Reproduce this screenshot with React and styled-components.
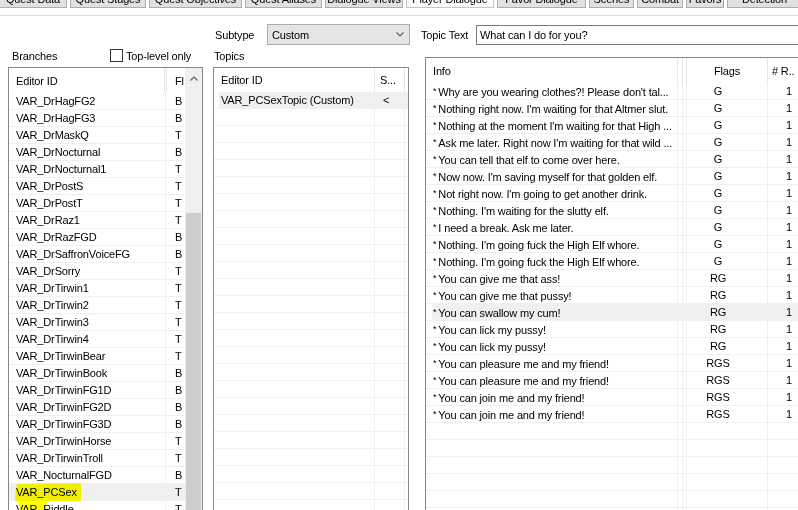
import React from "react";
import styled, { createGlobalStyle } from "styled-components";

const Global = createGlobalStyle`
  html, body { margin: 0; padding: 0; background: #fff; width: 798px; height: 510px; overflow: hidden; }
  body { font-family: "Liberation Sans", Arial, sans-serif; font-size: 11px; letter-spacing: -0.15px; color: #000; }
  * { box-sizing: border-box; }
`;

const Page = styled.div`
  width: 798px;
  height: 510px;
  overflow: hidden;
`;

const TabArea = styled.div`
  display: flex;
  align-items: flex-start;
  height: 16px;
  border-bottom: 1px solid #dadada;
`;

const TabBar = styled.div`
  display: flex;
  gap: 3px;
  margin-top: -14px;
  margin-left: -1px;
`;

const Tab = styled.div`
  flex: none;
  width: ${(p) => p.$w}px;
  height: 22px;
  display: flex;
  align-items: flex-end;
  justify-content: center;
  line-height: 13px;
  padding-bottom: 1px;
  white-space: nowrap;
  overflow: hidden;
  background: ${(p) => (p.$active ? "#fbfbfb" : "#e1e1e1")};
  border: 1px solid ${(p) => (p.$active ? "#c6c6c6" : "#adadad")};
`;

const Main = styled.div`
  display: flex;
  align-items: flex-start;
  padding-left: 8px;
`;

const LeftCol = styled.div`
  flex: none;
  width: 195px;
  display: flex;
  flex-direction: column;
`;

const MidCol = styled.div`
  flex: none;
  width: 197px;
  margin-left: 10px;
  display: flex;
  flex-direction: column;
`;

const RightCol = styled.div`
  flex: none;
  width: 384px;
  margin-left: 15px;
  display: flex;
  flex-direction: column;
`;

const BranchesRow = styled.div`
  margin-top: 32px;
  height: 15px;
  display: flex;
  align-items: center;
`;

const Label = styled.span`
  flex: none;
  width: ${(p) => (p.$w ? `${p.$w}px` : "auto")};
  padding-left: ${(p) => p.$pad || 0}px;
  white-space: nowrap;
`;

const CheckBox = styled.span`
  flex: none;
  width: 13px;
  height: 13px;
  border: 1px solid #333;
  background: #fff;
  margin-right: 3px;
`;

const FieldRow = styled.div`
  margin-top: 8px;
  height: 21px;
  display: flex;
  align-items: center;
  margin-left: ${(p) => p.$ml || 0}px;
  padding-left: ${(p) => p.$pl || 0}px;
`;

const Combo = styled.div`
  flex: 1;
  height: 21px;
  display: flex;
  align-items: center;
  justify-content: space-between;
  padding: 0 5px 0 4px;
  background: #e5e5e5;
  border: 1px solid #acacac;
`;

const TextInput = styled.div`
  flex: 1;
  height: 20px;
  display: flex;
  align-items: center;
  padding-left: 3px;
  background: #fff;
  border: 1px solid #7a7a7a;
  white-space: nowrap;
`;

const TopicsLabel = styled.div`
  margin-top: 5px;
  height: 17px;
  line-height: 13px;
  padding-left: 1px;
`;

const ListBox = styled.div`
  position: relative;
  display: flex;
  width: ${(p) => p.$w}px;
  height: ${(p) => p.$h}px;
  margin-top: ${(p) => p.$mt || 0}px;
  border: 1px solid #828790;
  background: #fff;
  overflow: hidden;
`;

const ListContent = styled.div`
  flex: 1;
  display: flex;
  flex-direction: column;
  min-width: 0;
`;

const HeaderRow = styled.div`
  flex: none;
  display: grid;
  grid-template-columns: ${(p) => p.$cols};
  height: ${(p) => p.$h || 25}px;
`;

const HeaderCell = styled.div`
  display: flex;
  align-items: center;
  justify-content: ${(p) => (p.$center ? "center" : "flex-start")};
  padding-left: ${(p) => p.$pad || 0}px;
  border-right: ${(p) => (p.$line ? "1px solid #e5e5e5" : "none")};
  white-space: nowrap;
  overflow: hidden;
`;

const HeaderDivider = styled.div`
  border-left: 1px solid #e5e5e5;
  border-right: 1px solid #e5e5e5;
`;

const Row = styled.div`
  position: relative;
  flex: none;
  display: grid;
  grid-template-columns: ${(p) => p.$cols};
  height: 17px;
  border-bottom: 1px solid #f0f0f0;
  background: ${(p) =>
    p.$sel
      ? p.$inset
        ? `linear-gradient(to right, transparent ${p.$inset}px, #f0f0f0 ${p.$inset}px)`
        : "#f0f0f0"
      : "transparent"};
`;

const Cell = styled.div`
  line-height: 16px;
  padding-left: ${(p) => p.$pad || 0}px;
  padding-right: ${(p) => p.$padR || 0}px;
  text-align: ${(p) => p.$align || "left"};
  border-right: ${(p) => (p.$line ? "1px solid #f0f0f0" : "none")};
  white-space: nowrap;
  overflow: hidden;
`;

const Star = styled.span`
  font-size: 9px;
  vertical-align: 2px;
  margin-right: 2px;
`;

const ScrollBar = styled.div`
  flex: none;
  width: 17px;
  background: #f0f0f0;
  display: flex;
  flex-direction: column;
  align-items: center;
`;

const ScrollArrow = styled.div`
  flex: none;
  height: 20px;
  width: 17px;
  display: flex;
  align-items: center;
  justify-content: center;
`;

const ScrollThumb = styled.div`
  flex: none;
  width: 15px;
  height: 320px;
  margin-top: 125px;
  background: #cdcdcd;
`;

const Highlight = styled.div`
  position: absolute;
  left: 6px;
  top: -1px;
  width: 66px;
  height: 27px;
  background: #ffff00;
  mix-blend-mode: multiply;
  clip-path: polygon(2px 1px, 66px 0, 66px 18px, 32px 18px, 31px 27px, 5px 27px, 3px 19px, 0 17px, 1px 6px);
  pointer-events: none;
`;

const tabs = [
  ["Quest Data", 68],
  ["Quest Stages", 76],
  ["Quest Objectives", 93],
  ["Quest Aliases", 77],
  ["Dialogue Views", 78],
  ["Player Dialogue", 88, true],
  ["Favor Dialogue", 89],
  ["Scenes", 45],
  ["Combat", 46],
  ["Favors", 38],
  ["Detection", 75],
];

const branches = [
  ["VAR_DrHagFG2", "B"],
  ["VAR_DrHagFG3", "B"],
  ["VAR_DrMaskQ", "T"],
  ["VAR_DrNocturnal", "B"],
  ["VAR_DrNocturnal1", "T"],
  ["VAR_DrPostS", "T"],
  ["VAR_DrPostT", "T"],
  ["VAR_DrRaz1", "T"],
  ["VAR_DrRazFGD", "B"],
  ["VAR_DrSaffronVoiceFG", "B"],
  ["VAR_DrSorry", "T"],
  ["VAR_DrTirwin1", "T"],
  ["VAR_DrTirwin2", "T"],
  ["VAR_DrTirwin3", "T"],
  ["VAR_DrTirwin4", "T"],
  ["VAR_DrTirwinBear", "T"],
  ["VAR_DrTirwinBook", "B"],
  ["VAR_DrTirwinFG1D", "B"],
  ["VAR_DrTirwinFG2D", "B"],
  ["VAR_DrTirwinFG3D", "B"],
  ["VAR_DrTirwinHorse", "T"],
  ["VAR_DrTirwinTroll", "T"],
  ["VAR_NocturnalFGD", "B"],
  ["VAR_PCSex", "T", true],
  ["VAR_Riddle", "T"],
];

const infos = [
  ["Why are you wearing clothes?! Please don't tal...", "G"],
  ["Nothing right now. I'm waiting for that Altmer slut.", "G"],
  ["Nothing at the moment I'm waiting for that High ...", "G"],
  ["Ask me later. Right now I'm waiting for that wild ...", "G"],
  ["You can tell that elf to come over here.", "G"],
  ["Now now. I'm saving myself for that golden elf.", "G"],
  ["Not right now. I'm going to get another drink.", "G"],
  ["Nothing. I'm waiting for the slutty elf.", "G"],
  ["I need a break. Ask me later.", "G"],
  ["Nothing. I'm going fuck the High Elf whore.", "G"],
  ["Nothing. I'm going fuck the High Elf whore.", "G"],
  ["You can give me that ass!", "RG"],
  ["You can give me that pussy!", "RG"],
  ["You can swallow my cum!", "RG", true],
  ["You can lick my pussy!", "RG"],
  ["You can lick my pussy!", "RG"],
  ["You can pleasure me and my friend!", "RGS"],
  ["You can pleasure me and my friend!", "RGS"],
  ["You can join me and my friend!", "RGS"],
  ["You can join me and my friend!", "RGS"],
];

const LEFT_COLS = "157px 19px";
const TOPIC_COLS = "161px 30px 4px";
const INFO_COLS = "252px 5px 4px 81px 40px";

const Chevron = ({ up }) => (
  <svg width="8" height="5" viewBox="0 0 8 5">
    <path
      d={up ? "M0.5 4.5 L4 1 L7.5 4.5" : "M0.5 0.5 L4 4 L7.5 0.5"}
      fill="none"
      stroke="#606060"
      strokeWidth="1.2"
    />
  </svg>
);

export default function App() {
  return (
    <Page>
      <Global />
      <TabArea>
        <TabBar>
          {tabs.map(([t, w, a]) => (
            <Tab key={t} $w={w} $active={a}>
              {t}
            </Tab>
          ))}
        </TabBar>
      </TabArea>
      <Main>
        <LeftCol>
          <BranchesRow>
            <Label $w={102} $pad={4}>Branches</Label>
            <CheckBox />
            <Label>Top-level only</Label>
          </BranchesRow>
          <ListBox $w={195} $h={460} $mt={4}>
            <ListContent>
              <HeaderRow $cols="155px 3px 18px">
                <HeaderCell $pad={7}>Editor ID</HeaderCell>
                <HeaderDivider />
                <HeaderCell $pad={8}>Fl</HeaderCell>
              </HeaderRow>
              {branches.map(([id, fl, sel]) => (
                <Row key={id} $cols={LEFT_COLS} $sel={sel}>
                  <Cell $pad={7} $line>
                    {id}
                  </Cell>
                  <Cell $pad={9}>{fl}</Cell>
                  {sel && <Highlight />}
                </Row>
              ))}
            </ListContent>
            <ScrollBar>
              <ScrollArrow>
                <Chevron up />
              </ScrollArrow>
              <ScrollThumb />
            </ScrollBar>
          </ListBox>
        </LeftCol>

        <MidCol>
          <FieldRow $pl={2}>
            <Label $w={52}>Subtype</Label>
            <Combo>
              <span>Custom</span>
              <Chevron />
            </Combo>
          </FieldRow>
          <TopicsLabel>Topics</TopicsLabel>
          <ListBox $w={196} $h={460}>
            <ListContent>
              <HeaderRow $cols={TOPIC_COLS} $h={24}>
                <HeaderCell $pad={7} $line>
                  Editor ID
                </HeaderCell>
                <HeaderCell $pad={5} $line>
                  S...
                </HeaderCell>
                <HeaderCell />
              </HeaderRow>
              <Row $cols={TOPIC_COLS} $sel $inset={5}>
                <Cell $pad={7} $line>
                  VAR_PCSexTopic (Custom)
                </Cell>
                <Cell $pad={8} $line>
                  &lt;
                </Cell>
                <Cell />
              </Row>
              {Array.from({ length: 24 }).map((_, i) => (
                <Row key={i} $cols={TOPIC_COLS}>
                  <Cell $line />
                  <Cell $line />
                  <Cell />
                </Row>
              ))}
            </ListContent>
          </ListBox>
        </MidCol>

        <RightCol>
          <FieldRow $ml={-4}>
            <Label $w={55}>Topic Text</Label>
            <TextInput>What can I do for you?</TextInput>
          </FieldRow>
          <ListBox $w={384} $h={470} $mt={12}>
            <ListContent>
              <HeaderRow $cols={INFO_COLS}>
                <HeaderCell $pad={7} $line>
                  Info
                </HeaderCell>
                <HeaderCell $line />
                <HeaderCell $line />
                <HeaderCell $center $line>
                  Flags
                </HeaderCell>
                <HeaderCell $pad={4}># R..</HeaderCell>
              </HeaderRow>
              {infos.map(([text, flags, sel], i) => (
                <Row key={i} $cols={INFO_COLS} $sel={sel} $inset={6}>
                  <Cell $pad={7} $line>
                    <Star>*</Star>
                    {text}
                  </Cell>
                  <Cell $line />
                  <Cell $line />
                  <Cell $align="center" $padR={18} $line>
                    {flags}
                  </Cell>
                  <Cell $align="right" $padR={16}>
                    1
                  </Cell>
                </Row>
              ))}
              {Array.from({ length: 8 }).map((_, i) => (
                <Row key={`e${i}`} $cols={INFO_COLS}>
                  <Cell $line />
                  <Cell $line />
                  <Cell $line />
                  <Cell $line />
                  <Cell />
                </Row>
              ))}
            </ListContent>
          </ListBox>
        </RightCol>
      </Main>
    </Page>
  );
}
